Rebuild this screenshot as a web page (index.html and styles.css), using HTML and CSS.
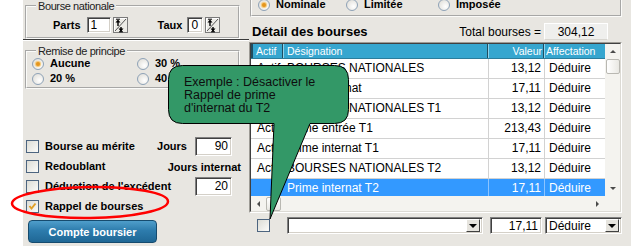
FILE: index.html
```html
<!DOCTYPE HTML>
<html lang="fr">
<head>
    <meta charset="utf-8">
    <meta name="viewport" content="width=device-width, initial-scale=1">
    <title>Détail des bourses</title>
    <link rel="stylesheet" href="styles.css">
</head>
<body>
    <div class="app">
        <div class="left">
            <fieldset class="grp grp-nat">
                <legend>Bourse nationale</legend>
                <div class="nat-row">
                    <span class="lbl">Parts</span>
                    <span class="field f-parts">1</span>
                    <span class="spin">
                        <svg width="15" height="16" viewBox="0 0 15 16"><rect x="0.5" y="0.5" width="14" height="15" fill="#ecebe6" stroke="#7a7a7a"/><path d="M1.5 14.5V1.5H13.5" fill="none" stroke="#fff"/><path d="M2 14L13 2" stroke="#555"/><path d="M5 4V9M8 10V15" stroke="#000" stroke-width="1.4"/><path d="M2.5 5.5L5 2.5L7.5 5.5Z M5.5 11.5L8 14.5L10.5 11.5Z" fill="#000"/><path d="M3 2.2H7M6 14.8H10" stroke="#000"/></svg>
                    </span>
                    <span class="lbl lbl-taux">Taux</span>
                    <span class="field f-taux">0</span>
                    <span class="spin">
                        <svg width="15" height="16" viewBox="0 0 15 16"><rect x="0.5" y="0.5" width="14" height="15" fill="#ecebe6" stroke="#7a7a7a"/><path d="M1.5 14.5V1.5H13.5" fill="none" stroke="#fff"/><path d="M2 14L13 2" stroke="#555"/><path d="M5 4V9M8 10V15" stroke="#000" stroke-width="1.4"/><path d="M2.5 5.5L5 2.5L7.5 5.5Z M5.5 11.5L8 14.5L10.5 11.5Z" fill="#000"/><path d="M3 2.2H7M6 14.8H10" stroke="#000"/></svg>
                    </span>
                </div>
            </fieldset>
            <div class="sep"></div>
            <fieldset class="grp grp-remise">
                <legend>Remise de principe</legend>
                <div class="remise">
                    <label class="opt"><span class="radio on"></span>Aucune</label>
                    <label class="opt"><span class="radio"></span>30 %</label>
                    <label class="opt"><span class="radio"></span>20 %</label>
                    <label class="opt"><span class="radio"></span>40 %</label>
                </div>
            </fieldset>
            <div class="checks">
                <div class="crow">
                    <span class="check"></span>
                    <span class="clbl">Bourse au mérite</span>
                    <span class="jl">Jours</span>
                    <span class="field num">90</span>
                </div>
                <div class="crow">
                    <span class="check"></span>
                    <span class="clbl">Redoublant</span>
                    <span class="jl jl-int">Jours internat</span>
                </div>
                <div class="crow">
                    <span class="check"></span>
                    <span class="clbl">Déduction de l'excédent</span>
                    <span class="field num">20</span>
                </div>
                <div class="crow">
                    <span class="check">
                        <svg width="11" height="11" viewBox="0 0 11 11"><path d="M2.5 5L4.5 7.5L8.5 2.5" fill="none" stroke="#e0a028" stroke-width="2"/></svg>
                    </span>
                    <span class="clbl">Rappel de bourses</span>
                </div>
            </div>
            <button class="btn">Compte boursier</button>
        </div>

        <div class="right">
            <div class="mode">
                <label class="opt m1"><span class="radio on"></span>Nominale</label>
                <label class="opt m2"><span class="radio"></span>Limitée</label>
                <label class="opt"><span class="radio"></span>Imposée</label>
            </div>
            <div class="head">
                <span class="title">Détail des bourses</span>
                <span class="tot-lbl">Total bourses =</span>
                <span class="total">304,12</span>
            </div>
            <div class="frame">
                <div class="frame-in">
                    <div class="grid">
                        <div class="row hdr">
                            <span class="c c-act">Actif</span>
                            <span class="c c-des">Désignation</span>
                            <span class="c c-val">Valeur</span>
                            <span class="c c-aff">Affectation</span>
                        </div>
                        <div class="row">
                            <span class="c c-act">Actif</span>
                            <span class="c c-des">BOURSES NATIONALES</span>
                            <span class="c c-val">13,12</span>
                            <span class="c c-aff">Déduire</span>
                        </div>
                        <div class="row">
                            <span class="c c-act">Actif</span>
                            <span class="c c-des">Prime internat</span>
                            <span class="c c-val">17,11</span>
                            <span class="c c-aff">Déduire</span>
                        </div>
                        <div class="row">
                            <span class="c c-act">Actif</span>
                            <span class="c c-des">BOURSES NATIONALES T1</span>
                            <span class="c c-val">13,12</span>
                            <span class="c c-aff">Déduire</span>
                        </div>
                        <div class="row">
                            <span class="c c-act">Actif</span>
                            <span class="c c-des">Prime entrée T1</span>
                            <span class="c c-val">213,43</span>
                            <span class="c c-aff">Déduire</span>
                        </div>
                        <div class="row">
                            <span class="c c-act">Actif</span>
                            <span class="c c-des">Prime internat T1</span>
                            <span class="c c-val">17,11</span>
                            <span class="c c-aff">Déduire</span>
                        </div>
                        <div class="row">
                            <span class="c c-act">Actif</span>
                            <span class="c c-des">BOURSES NATIONALES T2</span>
                            <span class="c c-val">13,12</span>
                            <span class="c c-aff">Déduire</span>
                        </div>
                        <div class="row sel">
                            <span class="c c-act"></span>
                            <span class="c c-des">Prime internat T2</span>
                            <span class="c c-val">17,11</span>
                            <span class="c c-aff">Déduire</span>
                        </div>
                    </div>
                    <div class="vscroll">
                        <span class="arr"><i class="tri up"></i></span>
                        <span class="thumb"></span>
                        <span class="fill"></span>
                        <span class="arr"><i class="tri down"></i></span>
                    </div>
                    <div class="hscroll">
                        <span class="arr"><i class="tri lt"></i></span>
                        <span class="thumb"></span>
                        <span class="fill"></span>
                        <span class="arr"><i class="tri rt"></i></span>
                    </div>
                    <div class="corner"></div>
                </div>
            </div>
            <div class="edit">
                <span class="check"></span>
                <span class="field combo c-big"><span class="fill"></span><span class="dd"><i class="tri dn"></i></span></span>
                <span class="field num e-val">17,11</span>
                <span class="field combo c-aff2">Déduire<span class="fill"></span><span class="dd"><i class="tri dn"></i></span></span>
            </div>
        </div>
    </div>

    <div class="callout">
        <svg width="182" height="157" viewBox="0 0 182 157"><path d="M14.5 0.5H166.5Q180.5 0.5 180.5 14.5V44.5Q180.5 58.5 166.5 58.5H142L102 154L106 58.5H14.5Q0.5 58.5 0.5 44.5V14.5Q0.5 0.5 14.5 0.5Z" fill="#339867" stroke="#000" stroke-width="1"/></svg>
        <div class="callout-text">Exemple : Désactiver le<br>Rappel de prime<br>d'internat du T2</div>
    </div>
    <svg class="ring" width="164" height="38" viewBox="0 0 164 38"><ellipse cx="81" cy="18.5" rx="78" ry="15.5" fill="none" stroke="#f00" stroke-width="2.5" transform="rotate(-0.8 81 18.5)"/></svg>
</body>
</html>
```

FILE: styles.css
```css
* {
    box-sizing: border-box;
}
body {
    margin: 0;
    width: 631px;
    height: 246px;
    overflow: hidden;
    position: relative;
    background: #fff;
    font-family: "Liberation Sans", Arial, sans-serif;
    font-size: 12px;
    color: #000;
}
.app {
    margin-left: 23px;
    height: 246px;
    background: #e8e6e1;
    display: flex;
}
.left {
    width: 226px;
    flex: none;
    padding-left: 2px;
}
.right {
    flex: 1;
}

/* group boxes */
.grp {
    margin: 0;
    padding: 0;
    width: 215px;
    border: 2px groove #fbfbf9;
}
.grp legend {
    margin-left: 9px;
    padding: 0 2px;
    font-size: 11px;
    line-height: 12px;
    letter-spacing: -0.4px;
    color: #222;
}
.grp-nat {
    height: 39px;
}
.nat-row {
    display: flex;
    align-items: center;
    margin-top: 5px;
    padding-left: 26px;
}
.lbl {
    font-weight: bold;
    font-size: 11px;
}
.lbl-taux {
    margin-left: 30px;
}
.field {
    display: flex;
    align-items: center;
    background: #fff;
    border: 1px solid;
    border-color: #808080 #fff #fff #808080;
    box-shadow: inset 1px 1px 0 #404040, inset -1px -1px 0 #d4d0c8;
    padding: 0 3px;
    font-size: 12px;
}
.f-parts {
    width: 24px;
    height: 16px;
    margin-left: 6px;
}
.f-taux {
    width: 16px;
    height: 16px;
    margin-left: 5px;
}
.spin {
    display: flex;
    margin-left: 2px;
}
.sep {
    margin: 0 0 0 -2px;
    width: 226px;
    border-top: 1px solid #3a3a3a;
    border-bottom: 1px solid #fff;
}
.grp-remise {
    margin-top: 4px;
    height: 44px;
}
.remise {
    display: grid;
    grid-template-columns: 105px auto;
    margin-top: -1px;
    padding-left: 5px;
}
.opt {
    display: flex;
    align-items: center;
    font-weight: bold;
    font-size: 11px;
    line-height: 15px;
    white-space: nowrap;
}
.radio {
    width: 12px;
    height: 12px;
    margin-right: 6px;
    border-radius: 50%;
    border: 1px solid #8ea2b7;
    background: radial-gradient(circle at 65% 65%, #fff, #dcdad3);
    flex: none;
}
.radio.on::after {
    content: '';
    display: block;
    width: 4px;
    height: 4px;
    margin: 3px;
    border-radius: 50%;
    background: #e3951f;
    box-shadow: 0 0 1px 1px #f5c46a;
}

/* check rows */
.checks {
    margin-top: 47px;
}
.crow {
    display: flex;
    align-items: center;
    height: 20px;
    padding-right: 17px;
}
.check {
    width: 13px;
    height: 13px;
    flex: none;
    margin: 0 6px 0 1px;
    border: 1px solid #4d6580;
    background: linear-gradient(135deg, #dcdcd5, #fbfbf9);
    display: flex;
}
.clbl {
    flex: 1;
    font-weight: bold;
    font-size: 11px;
    white-space: nowrap;
}
.jl {
    font-weight: bold;
    font-size: 11px;
    margin-right: 8px;
}
.jl-int {
    margin-right: -9px;
    padding-top: 2px;
}
.num {
    width: 37px;
    height: 19px;
    justify-content: flex-end;
}
.btn {
    display: block;
    margin: 4px 0 0 3px;
    width: 129px;
    height: 23px;
    border: 1px solid #164b6e;
    border-radius: 4px;
    background: linear-gradient(#4f9ecb, #2d7cad 45%, #1f6795);
    color: #fff;
    font-family: "Liberation Sans", Arial, sans-serif;
    font-weight: bold;
    font-size: 11px;
    padding: 0;
}

/* right side */
.mode {
    display: flex;
    margin: -12px 0 0 1px;
    width: 372px;
    height: 29px;
    padding: 6px 0 0 6px;
    border: 2px groove #fbfbf9;
    border-top: none;
}
.mode .opt {
    line-height: 13px;
}
.m1 {
    width: 88px;
}
.m2 {
    width: 92px;
}
.head {
    display: flex;
    align-items: center;
    height: 17px;
    margin-top: 6px;
    padding: 0 23px 0 3px;
}
.title {
    font-weight: bold;
    font-size: 13px;
    margin-right: auto;
}
.tot-lbl {
    margin-right: 3px;
}
.total {
    width: 64px;
    height: 17px;
    display: flex;
    align-items: center;
    justify-content: center;
    background: #efefed;
    border: 1px solid #fff;
    border-bottom-color: #d8d6d0;
}
.frame {
    margin-top: 2px;
    width: 373px;
    height: 171px;
    border: 1px solid;
    border-color: #9d9b95 #fff #fff #9d9b95;
}
.frame-in {
    height: 169px;
    border: 1px solid;
    border-color: #404040 #dcdad4 #dcdad4 #404040;
    display: grid;
    grid-template-columns: 354px 15px;
    grid-template-rows: 152px 15px;
    background: #fff;
}
.grid {
    overflow: hidden;
}
.row {
    display: grid;
    grid-template-columns: 32px 205px 56px 61px;
    height: 20px;
    border-bottom: 1px solid #d2d2d2;
    line-height: 19px;
    white-space: nowrap;
}
.c {
    overflow: hidden;
}
.c-act {
    padding-left: 6px;
}
.c-des {
    padding-left: 4px;
}
.c-val {
    text-align: right;
    padding-right: 3px;
    border-left: 1px solid #d2d2d2;
}
.c-aff {
    padding-left: 4px;
    border-left: 1px solid #d2d2d2;
}
.row.hdr {
    height: 15px;
    line-height: 14px;
    background: #36a6cf;
    color: #fff;
    font-size: 10.5px;
    border-bottom: 1px solid #2b7d9c;
}
.hdr .c {
    border-left: 1px solid #8fd3ec;
    border-right: 1px solid #1f4d60;
}
.hdr .c-act {
    padding-left: 3px;
    border-left: 2px solid #1f4d60;
}
.hdr .c-des {
    padding-left: 3px;
}
.hdr .c-val {
    padding-right: 1px;
}
.hdr .c-aff {
    padding-left: 1px;
    border-right: none;
}
.row.sel {
    background: #3399ff;
    color: #fff;
}
.row.sel .c {
    border-left-color: #8cc4ff;
}

/* scrollbars */
.vscroll,
.hscroll,
.corner {
    background: #f4f3ef;
    display: flex;
}
.vscroll {
    flex-direction: column;
}
.arr {
    width: 15px;
    height: 15px;
    flex: none;
    display: flex;
    align-items: center;
    justify-content: center;
}
.fill {
    flex: 1;
}
.vscroll .thumb {
    height: 15px;
    margin: 0 0 0 1px;
    border: 1px solid #b9b8b2;
    border-radius: 2px;
    background: linear-gradient(90deg, #fff, #e9e8e3);
}
.hscroll .thumb {
    width: 15px;
    margin-top: 1px;
    border: 1px solid #b9b8b2;
    border-radius: 2px;
    background: linear-gradient(#fff, #e9e8e3);
}
.tri {
    width: 0;
    height: 0;
    border: 3px solid transparent;
}
.tri.up {
    border-bottom: 3px solid #4a4a4a;
    border-top: none;
}
.tri.down {
    border-top: 3px solid #4a4a4a;
    border-bottom: none;
}
.tri.lt {
    border-right: 3px solid #4a4a4a;
    border-left: none;
}
.tri.rt {
    border-left: 3px solid #4a4a4a;
    border-right: none;
}

/* edit line */
.edit {
    display: flex;
    align-items: center;
    height: 17px;
    margin-top: 4px;
}
.edit .check {
    margin: 0 0 0 8px;
}
.combo {
    height: 17px;
    padding-right: 2px;
}
.c-big {
    width: 196px;
    margin-left: 17px;
}
.e-val {
    width: 52px;
    height: 17px;
    margin-left: 7px;
}
.c-aff2 {
    width: 77px;
    margin-left: 3px;
}
.dd {
    width: 14px;
    height: 13px;
    display: flex;
    align-items: center;
    justify-content: center;
    background: #e6e4de;
    border: 1px solid;
    border-color: #fff #404040 #404040 #fff;
}
.tri.dn {
    border-width: 4px 4px 0;
    border-top-color: #000;
}

/* overlays */
.callout {
    position: absolute;
    left: 168px;
    top: 65px;
    width: 182px;
    height: 157px;
}
.callout svg {
    display: block;
}
.callout-text {
    position: absolute;
    left: 16px;
    top: 11px;
    font-size: 12.5px;
    line-height: 13px;
    color: #0e0e0e;
    white-space: nowrap;
}
.ring {
    position: absolute;
    left: 9px;
    top: 184px;
}
```
